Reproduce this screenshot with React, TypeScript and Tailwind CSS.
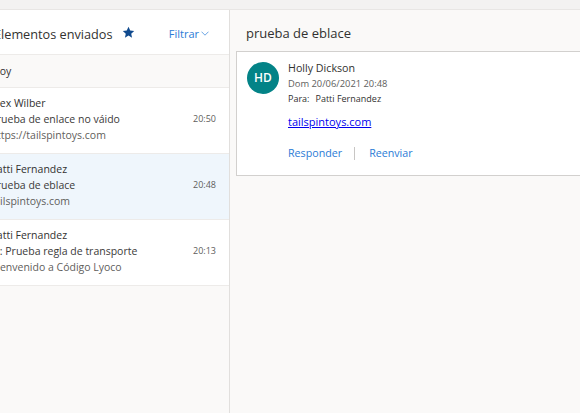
import React from "react";

type ItemProps = {
  sender: string;
  subject: string;
  preview: string;
  time: string;
  selected?: boolean;
  subjectClass?: string;
};

function Item({ sender, subject, preview, time, selected, subjectClass }: ItemProps) {
  return (
    <div
      className={
        "h-[66px] shrink-0 border-b border-[#edebe9] pt-[7px] pr-[13px] overflow-hidden " +
        (selected ? "bg-[#eff6fc]" : "bg-white")
      }
    >
      <div className="text-[10.5px] leading-[16px] whitespace-nowrap ml-[-9.5px] text-[#323130]">{sender}</div>
      <div className="flex items-center justify-between text-[10.5px] leading-[16px]">
        <span className={"whitespace-nowrap text-[#3b3a39] " + (subjectClass ?? "ml-[-9.5px]")}>{subject}</span>
        <span className="text-[9px] text-[#605e5c]">{time}</span>
      </div>
      <div className="text-[10.5px] leading-[16px] whitespace-nowrap ml-[-9.5px] text-[#5f5e5c]">{preview}</div>
    </div>
  );
}

export default function App() {
  return (
    <div className="w-[580px] h-[413px] overflow-hidden bg-[#faf9f8] flex flex-col font-['Open_Sans','Noto_Sans',sans-serif] text-[#323130]">
      <div className="h-[10px] shrink-0 bg-[#f3f2f1] border-b border-[#e8e6e4]" />
      <div className="flex flex-1 min-h-0">
        {/* Left list panel */}
        <div className="w-[230px] shrink-0 border-r border-[#e1dfdd] flex flex-col overflow-hidden">
          <div className="h-[45px] shrink-0 bg-white border-b border-[#edebe9] flex items-center justify-between pr-[20px]">
            <div className="flex items-center">
              <span className="ml-[-6px] mt-[4px] text-[12.7px] leading-[17px] whitespace-nowrap text-[#323130]">
                Elementos enviados
              </span>
              <svg className="ml-[10px] w-[13px] h-[13px]" viewBox="0 0 24 24" fill="#104a8e">
                <path d="M12 1.5l3.2 6.9 7.3.8-5.5 5 1.6 7.3L12 17.7l-6.6 3.8L7 14.2 1.5 9.2l7.3-.8L12 1.5z" />
              </svg>
            </div>
            <div className="flex items-center mt-[3px] text-[#2b7bd6] text-[11px] leading-[15px]">
              <span>Filtrar</span>
              <svg className="ml-[2px] w-[8px] h-[5px]" viewBox="0 0 8 5" fill="none" stroke="#5b9be0" strokeWidth="0.9">
                <path d="M0.5 0.7l3.5 3.5 3.5-3.5" />
              </svg>
            </div>
          </div>
          <div className="h-[33px] shrink-0 bg-[#faf9f8] border-b border-[#edebe9] flex items-center">
            <span className="ml-[-8px] text-[10.5px] leading-[15px] text-[#323130]">Hoy</span>
          </div>
          <Item
            sender="Alex Wilber"
            subject="Prueba de enlace no váido"
            preview="https://tailspintoys.com"
            time="20:50"
          />
          <Item
            sender="Patti Fernandez"
            subject="Prueba de eblace"
            preview="tailspintoys.com"
            time="20:48"
            selected
          />
          <Item
            sender="Patti Fernandez"
            subject="RE: Prueba regla de transporte"
            preview="Bienvenido a Código Lyoco"
            time="20:13"
            subjectClass="ml-[-12.5px]"
          />
          <div className="flex-1 bg-[#faf9f8]" />
        </div>

        {/* Reading pane */}
        <div className="flex-1 min-w-0 overflow-hidden pl-[6px] bg-[#faf9f8]">
          <div className="pt-[15px] pl-[10px] mb-[9px] text-[13px] leading-[17px] font-medium text-[#323130] whitespace-nowrap">
            prueba de eblace
          </div>
          <div className="w-[400px] border border-[#d2d0ce] bg-white pl-[10px] pt-0 pb-[14px]">
            <div className="flex items-start">
              <div className="mt-[10px] w-[32px] h-[32px] rounded-full bg-[#038387] flex items-center justify-center text-white text-[12px] font-semibold leading-none shrink-0">
                HD
              </div>
              <div className="ml-[9px] mt-[8.5px] flex flex-col">
                <div className="text-[10.7px] leading-[15px] text-[#323130]">Holly Dickson</div>
                <div className="text-[9.35px] leading-[15px] text-[#605e5c]">Dom 20/06/2021 20:48</div>
                <div className="text-[9px] leading-[15px] text-[#323130] flex">
                  <span>Para:</span>
                  <span className="ml-[6px]">Patti Fernandez</span>
                </div>
                <div className="mt-[8.7px] text-[11px] leading-[15px]">
                  <a className="text-[#0000ee] underline" href="#">tailspintoys.com</a>
                </div>
                <div className="mt-[17px] flex items-center text-[10.7px] leading-[15px] text-[#2b7bd6]">
                  <span>Responder</span>
                  <span className="mx-[12px] w-px h-[13px] bg-[#c8c6c4]" />
                  <span className="ml-[2px]">Reenviar</span>
                </div>
              </div>
            </div>
          </div>
        </div>
      </div>
    </div>
  );
}
